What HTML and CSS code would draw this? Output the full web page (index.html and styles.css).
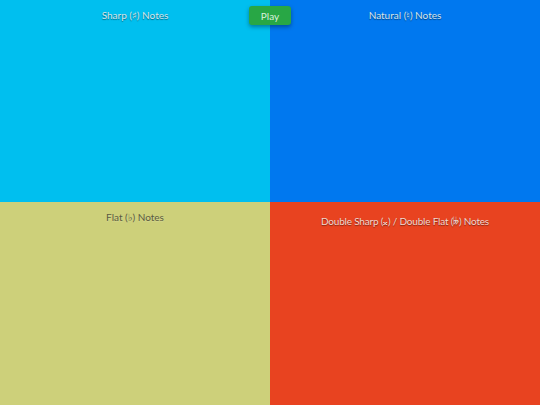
FILE: index.html
```html
<!DOCTYPE html>
<html>
<head>
<meta charset="utf-8">
<link rel="stylesheet" href="styles.css">
</head>
<body>
<div class="grid">
  <div class="quad sharp"><div class="label">Sharp (♯) Notes</div></div>
  <div class="quad natural"><div class="label">Natural (♮) Notes</div></div>
  <div class="quad flat"><div class="label">Flat (♭) Notes</div></div>
  <div class="quad double"><div class="label">Double Sharp (𝄪) / Double Flat (𝄫) Notes</div></div>
</div>
<button class="play">Play</button>
</body>
</html>
```
FILE: styles.css
```css
html, body {
  margin: 0;
  padding: 0;
  width: 540px;
  height: 405px;
  overflow: hidden;
  font-family: Lato, "DejaVu Sans", sans-serif;
}
.grid {
  display: grid;
  grid-template-columns: 270px 270px;
  grid-template-rows: 202px 203px;
  width: 540px;
  height: 405px;
}
.quad {
  display: flex;
  justify-content: center;
  align-items: flex-start;
}
.sharp { background: #00bfef; }
.natural { background: #0078ef; }
.flat { background: #cdd07a; }
.double { background: #e84320; }
.label {
  margin-top: 9px;
  font-size: 10px;
  line-height: 12px;
  color: #d8e4e8;
  text-shadow: 0 1px 1px rgba(0, 0, 0, 0.45);
}
.flat .label {
  margin-top: 9px;
  color: #5a5a40;
  text-shadow: 0 1px 1px rgba(255, 255, 255, 0.2);
}
.double .label {
  margin-top: 13px;
  color: #f0d8d0;
  letter-spacing: -0.2px;
}
.play {
  position: absolute;
  left: 249px;
  top: 6px;
  width: 42px;
  height: 19px;
  border: none;
  border-radius: 3px;
  background: #28a745;
  color: #d8f0dc;
  font-family: Lato, "DejaVu Sans", sans-serif;
  font-size: 10px;
  padding: 0;
  box-shadow: 0 2px 4px rgba(0, 0, 0, 0.35);
}
```
